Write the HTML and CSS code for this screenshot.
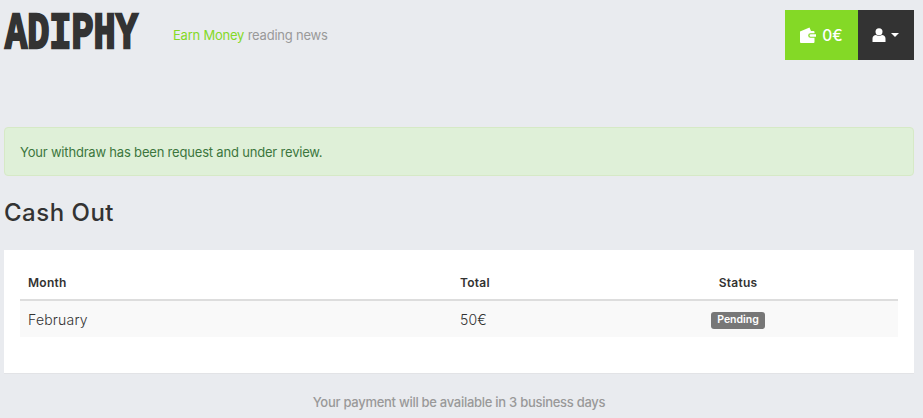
FILE: index.html
```html
<!DOCTYPE html>
<html lang="en">
<head>
<meta charset="utf-8">
<title>Adiphy - Cash Out</title>
<link rel="stylesheet" href="styles.css">
</head>
<body>
<div class="page">
  <header class="header">
    <div class="brand">
      <div class="logo-box"><span class="logo">ADIPHY</span></div>
      <p class="tagline"><span class="accent">Earn Money</span> reading news</p>
    </div>
    <div class="actions">
      <a class="btn-wallet">
        <svg class="ico-wallet" viewBox="0 0 16 16" width="16" height="16"><path d="M0 4.500 9.500 0.500 11 4H13.500Q14.500 4 14.500 5V6.200H10.500a2.300 2.300 0 0 0 0 4.600H14.500V15Q14.500 16 13.500 16H1Q0 16 0 15Z M10.700 7.300H16V9.700H10.700a1.200 1.200 0 0 1 0-2.400Z" fill="#fff"/></svg>
        <span>0€</span>
      </a>
      <a class="btn-user">
        <svg class="ico-user" viewBox="0 0 14 14" width="14" height="14"><circle cx="7" cy="3.700" r="3.500" fill="#fff"/><path d="M0.500 14V10.500C0.500 8.300 2.200 7 4 7C5 7.900 9 7.900 10 7C11.800 7 13.500 8.300 13.500 10.500V14Z" fill="#fff"/></svg>
        <span class="caret"></span>
      </a>
    </div>
  </header>

  <div class="alert">Your withdraw has been request and under review.</div>

  <h1 class="title">Cash Out</h1>

  <section class="card">
    <table class="table">
      <thead>
        <tr><th class="c-month">Month</th><th class="c-total">Total</th><th class="c-status">Status</th></tr>
      </thead>
      <tbody>
        <tr><td class="cell-text">February</td><td class="cell-text">50€</td><td class="cell-status"><span class="badge">Pending</span></td></tr>
      </tbody>
    </table>
  </section>

  <p class="note">Your payment will be available in 3 business days</p>
</div>
</body>
</html>
```
FILE: styles.css
```css
* { box-sizing: border-box; }
html, body { margin: 0; height: 100%; overflow: hidden; }
body {
  background: #e9ebef;
  font-family: Inter, "Open Sans", sans-serif;
  color: #333;
}
.page { width: 910px; margin-left: 4px; }
.header {
  display: flex;
  justify-content: space-between;
  align-items: flex-start;
  padding-top: 10px;
  height: 127px;
}
.brand { display: flex; align-items: center; height: 50px; }
.logo-box { width: 169px; height: 50px; display: flex; align-items: center; }
.logo {
  display: block;
  font-family: "Liberation Mono", monospace;
  font-weight: 700;
  font-size: 52px;
  line-height: 50px;
  color: #333;
  -webkit-text-stroke: 2.5px #333;
  transform: translateX(1px) scaleX(0.71);
  transform-origin: left center;
  white-space: nowrap;
}
.tagline { margin: 0; font-size: 13px; letter-spacing: -0.22px; color: #999; }
.accent { color: #84d926; }
.actions { display: flex; height: 50px; }
.btn-wallet {
  width: 73px;
  background: #84d926;
  color: #fff;
  display: flex;
  align-items: center;
  justify-content: center;
  gap: 6px;
  font-size: 15.500px;
  font-weight: 500;
}
.btn-user {
  width: 56px;
  padding-right: 1px;
  background: #333;
  display: flex;
  align-items: center;
  justify-content: center;
  gap: 5px;
}
.caret {
  width: 0; height: 0;
  border-left: 4px solid transparent;
  border-right: 4px solid transparent;
  border-top: 4px solid #fff;
}
.alert {
  height: 49px;
  padding: 0 15px;
  display: flex;
  align-items: center;
  background: #dff0d8;
  border: 1px solid #d6e9c6;
  border-radius: 4px;
  color: #3c763d;
  font-size: 13px;
  letter-spacing: -0.19px;
}
.title {
  margin: 23px 0 23px;
  font-size: 24px;
  line-height: 28px;
  font-weight: 500;
  letter-spacing: 0.5px;
  color: #333;
}
.card {
  height: 124px;
  padding: 16px 16px 0;
  background: #fff;
  border-bottom: 1px solid #e2e3e6;
}
.table { width: 100%; border-collapse: collapse; table-layout: fixed; }
.table th {
  height: 34px;
  padding: 0 8px;
  font-size: 12px;
  font-weight: 600;
  letter-spacing: 0.25px;
  text-align: left;
  color: #333;
  border-bottom: 2px solid #ddd;
}
.c-month { width: 432px; }
.c-total { width: 126px; }
.table th.c-status { text-align: center; }
.table td {
  height: 37px;
  padding: 0 8px;
  background: #f9f9f9;
  font-size: 14px;
  color: #333;
}
.table td.cell-text { font-weight: 300; letter-spacing: 0.2px; color: #333; }
.table td.cell-status { text-align: center; padding-top: 2px; }
.badge {
  display: inline-block;
  padding: 2px 6px 3px;
  background: #777;
  color: #fff;
  border-radius: 3px;
  font-size: 10.500px;
  line-height: 12px;
  font-weight: 600;
  vertical-align: middle;
}
.note {
  margin: 20px 0 0;
  text-align: center;
  font-size: 13px;
  font-weight: 500;
  letter-spacing: -0.28px;
  color: #999;
}
```
